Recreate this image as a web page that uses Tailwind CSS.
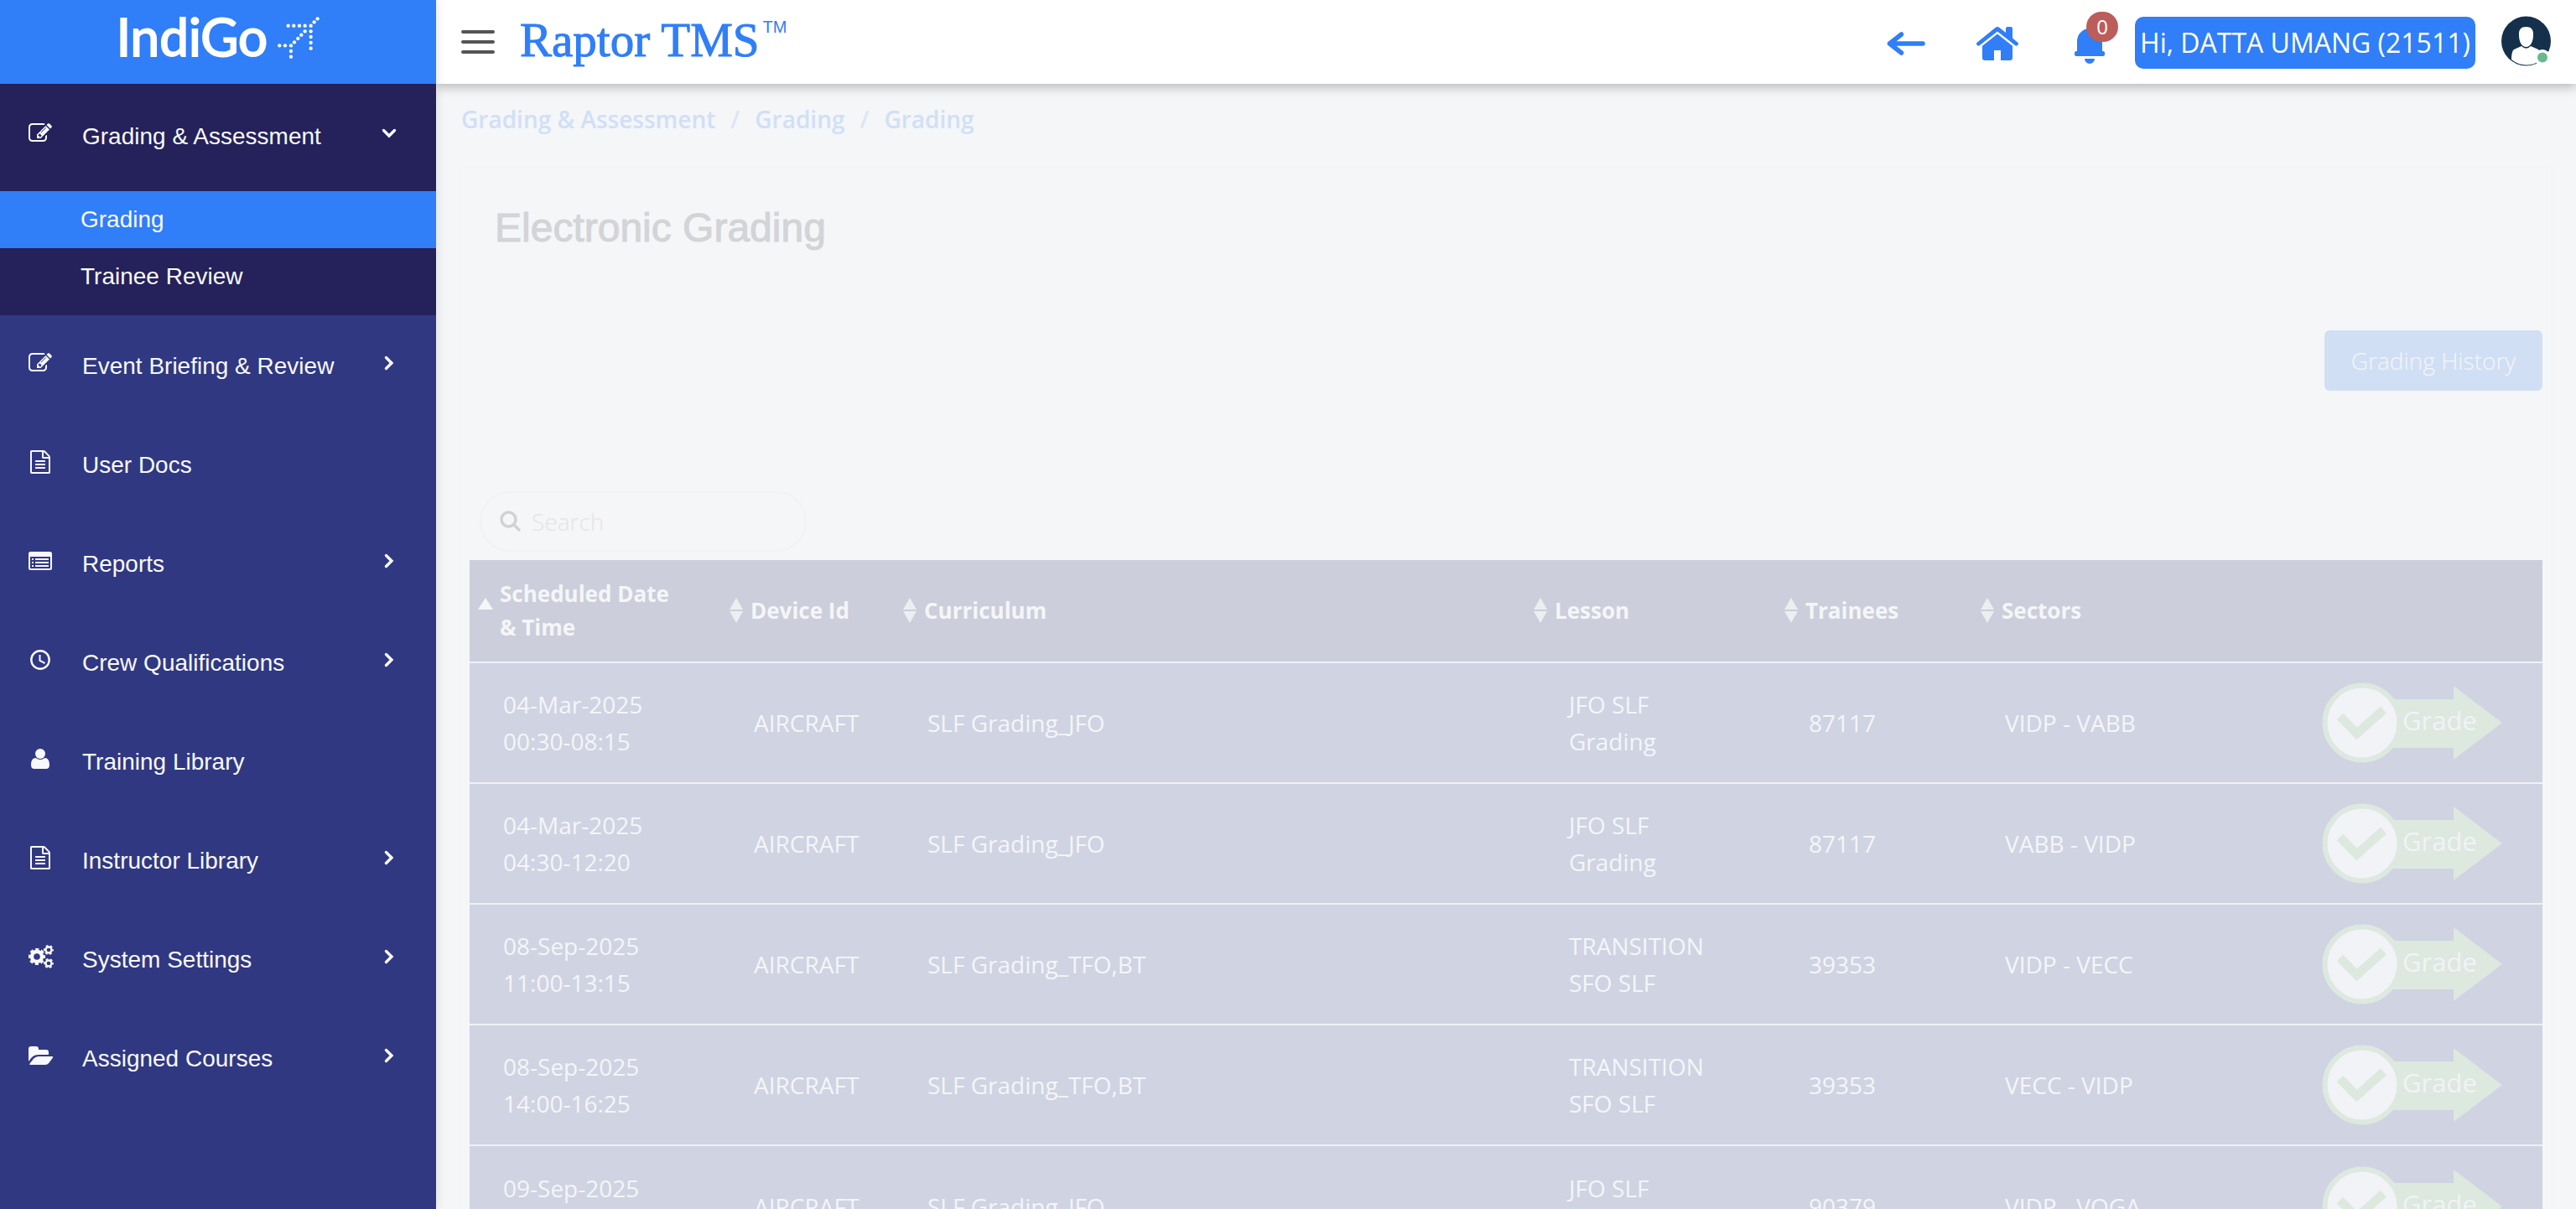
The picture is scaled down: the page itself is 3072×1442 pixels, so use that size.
<!DOCTYPE html>
<html lang="en">
<head>
<meta charset="utf-8">
<title>Raptor TMS - Electronic Grading</title>
<script src="https://cdn.jsdelivr.net/npm/@tailwindcss/browser@4"></script>
</head>
<body class="h-screen overflow-hidden bg-[#f4f6f8] font-['Open_Sans',sans-serif] text-[28px]">

<svg class="hidden" aria-hidden="true">
  <symbol id="edit" viewBox="0 0 1792 1792"><path d="M888 1184l116-116-152-152-116 116v56h96v96h56zm440-720q-16-16-33 1l-350 350q-17 17-1 33t33-1l350-350q17-17 1-33zm80 594v190q0 119-84.5 203.5t-203.5 84.5h-832q-119 0-203.5-84.5t-84.5-203.5v-832q0-119 84.5-203.5t203.5-84.5h832q63 0 117 25 15 7 18 23 3 17-9 29l-49 49q-14 14-32 8-23-6-45-6h-832q-66 0-113 47t-47 113v832q0 66 47 113t113 47h832q66 0 113-47t47-113v-126q0-13 9-22l64-64q15-15 35-7t20 29zm-96-738l288 288-672 672h-288v-288zm444 132l-92 92-288-288 92-92q28-28 68-28t68 28l152 152q28 28 28 68t-28 68z"/></symbol>
  <symbol id="file" viewBox="0 0 1792 1792"><path d="M1596 380q28 28 48 76t20 88v1152q0 40-28 68t-68 28h-1344q-40 0-68-28t-28-68v-1600q0-40 28-68t68-28h896q40 0 88 20t76 48zm-444-244v376h376q-10-29-22-41l-313-313q-12-12-41-22zm384 1528v-1024h-416q-40 0-68-28t-28-68v-416h-768v1536h1280zm-1024-864q0-14 9-23t23-9h704q14 0 23 9t9 23v64q0 14-9 23t-23 9h-704q-14 0-23-9t-9-23v-64zm736 224q14 0 23 9t9 23v64q0 14-9 23t-23 9h-704q-14 0-23-9t-9-23v-64q0-14 9-23t23-9h704zm0 256q14 0 23 9t9 23v64q0 14-9 23t-23 9h-704q-14 0-23-9t-9-23v-64q0-14 9-23t23-9h704z"/></symbol>
  <symbol id="list" viewBox="0 0 28 28"><path fill-rule="evenodd" d="M2.500 3h23a2.500 2.500 0 0 1 2.500 2.500v17a2.500 2.500 0 0 1-2.500 2.500h-23a2.500 2.500 0 0 1-2.500-2.500v-17a2.500 2.500 0 0 1 2.500-2.500zM2 9v13.500q0 .5.5.5h23q.5 0 .5-.5v-13.500z"/><path d="M4 11h2v2H4zM8 11h16v2H8zM4 15h2v2H4zM8 15h16v2H8zM4 19h2v2H4zM8 19h16v2H8z"/></symbol>
  <symbol id="clock" viewBox="0 0 28 28"><circle cx="14" cy="14" r="10.700" fill="none" stroke="currentColor" stroke-width="2.400"/><path d="M13.500 8v7l6 3" fill="none" stroke="currentColor" stroke-width="2"/></symbol>
  <symbol id="user" viewBox="0 0 28 28"><circle cx="14" cy="8" r="6"/><path d="M8.500 13q5.500 4 11 0C23.500 13 25 17 25 21.500c0 3-1.500 4.500-4 4.500H7c-2.500 0-4-1.500-4-4.500C3 17 4.500 13 8.500 13z"/></symbol>
  <symbol id="cogs" viewBox="0 0 30 28"><g fill="none" stroke="currentColor"><circle cx="10" cy="14" r="6" stroke-width="4.400"/><circle cx="10" cy="14" r="8.600" stroke-width="3" stroke-dasharray="4 2.754" stroke-dashoffset="2"/><circle cx="24" cy="6" r="3.500" stroke-width="2.400"/><circle cx="24" cy="6" r="5" stroke-width="2" stroke-dasharray="2.800 2.436" stroke-dashoffset="1.400"/><circle cx="24" cy="22" r="3.500" stroke-width="2.400"/><circle cx="24" cy="22" r="5" stroke-width="2" stroke-dasharray="2.800 2.436" stroke-dashoffset="1.400"/></g></symbol>
  <symbol id="folder" viewBox="0 0 30 28"><path d="M0 21V6a3 3 0 0 1 3-3h6a3 3 0 0 1 3 3v1h9a3 3 0 0 1 3 3v3H12q-5 0-8 3z"/><path d="M12 15h16q2 0 .7 2l-4.500 6q-1.700 2-4.200 2H2.500q-2 0-.7-2l4.500-5.500Q8.500 15 12 15z"/></symbol>
  <symbol id="chevron" viewBox="0 0 12 18"><path d="M2.500 2.500L9 9l-6.500 6.500" fill="none" stroke="currentColor" stroke-width="3.400" stroke-linecap="round"/></symbol>
  <symbol id="sort" viewBox="0 0 16 30"><path d="M8 0l8 14H0zM8 30l8-14H0z"/></symbol>
  <symbol id="grade" viewBox="0 0 216 96">
    <path d="M60 20h97V4l58 44-58 44V78H60z" fill="#dde8df"/>
    <circle cx="48" cy="48" r="44.500" fill="#f1f3f6" stroke="#dde8df" stroke-width="6"/>
    <path d="M21.500 40.500L41.500 61 73.500 32.500" fill="none" stroke="#dde8df" stroke-width="10.500"/>
    <text x="96" y="57" font-family="Open Sans" font-size="31" font-weight="500" fill="#f1f3f6">Grade</text>
  </symbol>
</svg>

<div class="flex h-full">
  <aside class="relative z-20 flex w-[520px] shrink-0 flex-col bg-[#303882] font-['Liberation_Sans',sans-serif] text-[#f8f9fc] shadow-[0_0_12px_rgba(0,0,0,0.12)]">
    <a href="#" class="flex h-[100px] shrink-0 items-center justify-center gap-3 bg-[#307ef8] pb-[10px] text-white">
      <span class="pb-1 font-['Lato',sans-serif] text-[62px] leading-[76px] [-webkit-text-stroke:2px_white]">IndiGo</span>
      <svg class="size-[50px] fill-white" viewBox="690 60 150 150" aria-hidden="true">
        <circle cx="697" cy="163" r="6.500"/><circle cx="717" cy="163" r="6.500"/><circle cx="738" cy="163" r="6.500"/><circle cx="738" cy="183" r="6.500"/><circle cx="738" cy="203" r="6.500"/><circle cx="750" cy="151" r="6.500"/><circle cx="763" cy="138" r="6.500"/><circle cx="775" cy="125" r="6.500"/><circle cx="788" cy="112" r="6.500"/><circle cx="809" cy="92" r="6.500"/><circle cx="821" cy="79" r="6.500"/><circle cx="833" cy="67" r="6.500"/><circle cx="728" cy="92" r="6.500"/><circle cx="748" cy="92" r="6.500"/><circle cx="768" cy="92" r="6.500"/><circle cx="788" cy="92" r="6.500"/><circle cx="809" cy="112" r="6.500"/><circle cx="809" cy="132" r="6.500"/><circle cx="809" cy="153" r="6.500"/><circle cx="809" cy="173" r="6.500"/>
      </svg>
    </a>
    <nav class="leading-8">
      <div class="bg-[#24215b] pb-3">
        <a href="#" class="flex h-[128px] items-center pr-12 pb-[10px] pl-[34px]"><svg class="h-7 w-[30px] shrink-0 fill-current"><use href="#edit" width="28" height="28"/></svg><span class="grow pt-2 pl-[34px]">Grading &amp; Assessment</span><svg class="mr-0.5 h-[18px] w-3 rotate-90"><use href="#chevron"/></svg></a>
        <a href="#" class="flex h-[68px] items-center bg-[#307ef8] pl-24">Grading</a>
        <a href="#" class="flex h-[68px] items-center pl-24">Trainee Review</a>
      </div>
      <a href="#" class="flex h-[118px] items-center pr-12 pb-1 pl-[34px]"><svg class="h-7 w-[30px] shrink-0 fill-current"><use href="#edit" width="28" height="28"/></svg><span class="grow pt-2 pl-[34px]">Event Briefing &amp; Review</span><svg class="mr-0.5 h-[18px] w-3"><use href="#chevron"/></svg></a>
      <a href="#" class="flex h-[118px] items-center pr-12 pb-1 pl-[34px]"><svg class="h-7 w-[30px] shrink-0 fill-current"><use href="#file" width="28" height="28"/></svg><span class="grow pt-2 pl-[34px]">User Docs</span></a>
      <a href="#" class="flex h-[118px] items-center pr-12 pb-1 pl-[34px]"><svg class="h-7 w-[30px] shrink-0 fill-current"><use href="#list" width="28" height="28"/></svg><span class="grow pt-2 pl-[34px]">Reports</span><svg class="mr-0.5 h-[18px] w-3"><use href="#chevron"/></svg></a>
      <a href="#" class="flex h-[118px] items-center pr-12 pb-1 pl-[34px]"><svg class="h-7 w-[30px] shrink-0 fill-current"><use href="#clock" width="28" height="28"/></svg><span class="grow pt-2 pl-[34px]">Crew Qualifications</span><svg class="mr-0.5 h-[18px] w-3"><use href="#chevron"/></svg></a>
      <a href="#" class="flex h-[118px] items-center pr-12 pb-1 pl-[34px]"><svg class="h-7 w-[30px] shrink-0 fill-current"><use href="#user" width="28" height="28"/></svg><span class="grow pt-2 pl-[34px]">Training Library</span></a>
      <a href="#" class="flex h-[118px] items-center pr-12 pb-1 pl-[34px]"><svg class="h-7 w-[30px] shrink-0 fill-current"><use href="#file" width="28" height="28"/></svg><span class="grow pt-2 pl-[34px]">Instructor Library</span><svg class="mr-0.5 h-[18px] w-3"><use href="#chevron"/></svg></a>
      <a href="#" class="flex h-[118px] items-center pr-12 pb-1 pl-[34px]"><svg class="h-7 w-[30px] shrink-0 fill-current"><use href="#cogs"/></svg><span class="grow pt-2 pl-[34px]">System Settings</span><svg class="mr-0.5 h-[18px] w-3"><use href="#chevron"/></svg></a>
      <a href="#" class="flex h-[118px] items-center pr-12 pb-1 pl-[34px]"><svg class="h-7 w-[30px] shrink-0 fill-current"><use href="#folder"/></svg><span class="grow pt-2 pl-[34px]">Assigned Courses</span><svg class="mr-0.5 h-[18px] w-3"><use href="#chevron"/></svg></a>
    </nav>
  </aside>

  <div class="flex min-w-0 grow flex-col">
    <header class="relative z-10 flex h-[100px] shrink-0 items-center bg-white pr-[30px] pl-[30px] text-[#307ef8] shadow-[0_4px_12px_rgba(0,0,0,0.25)]">
      <button type="button" aria-label="Toggle menu" class="flex w-10 flex-col gap-2"><span class="h-1 rounded-xs bg-[#555]"></span><span class="h-1 rounded-xs bg-[#555]"></span><span class="h-1 rounded-xs bg-[#555]"></span></button>
      <a href="#" class="flex items-start pb-1 pl-[30px]"><span class="font-['Liberation_Serif',serif] text-[57px] leading-16 [-webkit-text-stroke:1px_#307ef8]">Raptor TMS</span><span class="pt-1 pl-1 font-['Liberation_Sans',sans-serif] text-[20px] leading-6">TM</span></a>
      <div class="ml-auto flex items-center">
        <button type="button" aria-label="Back" class="pt-1"><svg class="h-7 w-[46px]" viewBox="0 0 46 28" fill="none" stroke="currentColor" stroke-width="5.500" stroke-linecap="round" stroke-linejoin="round"><path d="M43 14H4M17.500 3L3.500 14l14 11"/></svg></button>
        <a href="#" aria-label="Home" class="ml-[61px] pt-1"><svg class="h-10 w-[50px] fill-current" viewBox="0 0 50 40"><path d="M35 2q0-2 2-2h4q2 0 2 2v11.500l6.300 5.200q1.500 1.500 0 3t-3 .6L25 5.500 3.700 22.300q-1.500 1-3-.6t0-3L22.500 1Q25-1 27.500 1L35 7z"/><path d="M25 8.500l18 14.300V37q0 3-3 3H29V28h-8v12H10q-3 0-3-3V22.800z"/></svg></a>
        <button type="button" aria-label="Notifications" class="relative ml-[67px] pt-[10px]"><svg class="h-[42px] w-9 fill-current" viewBox="0 0 36 42"><path d="M3 27V15a15 15 0 0 1 30 0v12h1q2 0 2 2v2q0 2-2 2H2q-2 0-2-2v-2q0-2 2-2zM12 36h12a6 6 0 0 1-12 0z"/></svg><span class="absolute -top-[10px] left-[14px] flex h-9 w-[38px] items-center justify-center rounded-full bg-[#bb5d5b] text-[24px] leading-9 text-white">0</span></button>
        <button type="button" class="mt-0.5 ml-9 flex h-[62px] w-[406px] items-center justify-center rounded-[10px] bg-[#307ef8] text-[32px] whitespace-nowrap text-white">Hi, DATTA UMANG (21511)</button>
        <button type="button" aria-label="Profile" class="mb-0.5 ml-[31px]"><svg class="h-[60px] w-[59px]" viewBox="0 0 59 60"><circle cx="29.500" cy="30" r="29.500" fill="#15304b"/><path d="M29.500 13c6 0 9 3 8.500 10 0 8-3.500 14-8.500 14s-8.500-6-8.500-14c-.5-7 2.500-10 8.500-10zM24 36q5.500 5.500 11 0l9 4q3 2 3 13-8 5.500-17.500 5.500T12 52q0-10 3-12z" fill="#fff"/><circle cx="49" cy="49.500" r="9.500" fill="#fff"/><circle cx="49" cy="49.500" r="6" fill="#68b98c"/></svg></button>
      </div>
    </header>

    <main class="min-h-0 grow overflow-hidden">
      <nav aria-label="Breadcrumb" class="flex h-[86px] items-center gap-[18px] pb-0.5 pl-[30px] font-semibold text-[#d1dff6]"><a href="#">Grading &amp; Assessment</a><span class="text-[#dbe7f2]">/</span><a href="#">Grading</a><span class="text-[#dbe7f2]">/</span><a href="#">Grading</a></nav>

      <section class="mx-7 mt-3 border-2 border-[#f2f4f7] px-[10px]">
        <h1 class="mt-9 pl-[30px] font-['Liberation_Sans',sans-serif] text-[48px] leading-[72px] text-[#d2d4d7] [-webkit-text-stroke:1px_#d2d4d7]">Electronic Grading</h1>
        <div class="mt-[86px] flex justify-end"><button type="button" class="h-[72px] w-[260px] rounded-md bg-[#d1dff5] font-light text-[#f4f6f8]">Grading History</button></div>
        <label class="mt-[120px] ml-3 flex h-[72px] w-[390px] items-center gap-3 rounded-full border-2 border-[#f0f2f4] pl-[22px]">
          <svg class="size-[26px] shrink-0 text-[#d0d2d4]" viewBox="0 0 26 26" fill="none" stroke="currentColor" stroke-width="3.500" stroke-linecap="round"><circle cx="10.500" cy="10.500" r="8.500"/><path d="M17 17l6 6"/></svg>
          <input type="search" placeholder="Search" aria-label="Search" class="min-w-0 grow bg-transparent font-light outline-none placeholder:text-[#e3e5e7]">
        </label>

        <table class="mt-[10px] w-full table-fixed border-collapse text-left text-[#f4f6f8]">
          <colgroup><col class="w-[299px]"><col class="w-[207px]"><col><col class="w-[299px]"><col class="w-[234px]"><col class="w-[380px]"><col class="w-[301px]"></colgroup>
          <thead>
            <tr class="h-[122px] bg-[#cdcedb] text-[26px] leading-10">
              <th class="p-0 pb-0.5"><div class="flex items-center pl-[10px]"><svg class="mr-2 h-[30px] w-[18px] shrink-0 fill-[#f4f6f8]" viewBox="0 0 18 30"><path d="M9 0l9 14H0z"/></svg><span>Scheduled Date<br>&amp; Time</span></div></th>
              <th class="p-0 pb-0.5"><div class="flex items-center pl-[11px]"><svg class="mr-[9px] h-[30px] w-4 shrink-0 fill-[#edeef0]"><use href="#sort"/></svg>Device Id</div></th>
              <th class="p-0 pb-0.5"><div class="flex items-center pl-[11px]"><svg class="mr-[9px] h-[30px] w-4 shrink-0 fill-[#edeef0]"><use href="#sort"/></svg>Curriculum</div></th>
              <th class="p-0 pb-0.5"><div class="flex items-center pl-[11px]"><svg class="mr-[9px] h-[30px] w-4 shrink-0 fill-[#edeef0]"><use href="#sort"/></svg>Lesson</div></th>
              <th class="p-0 pb-0.5"><div class="flex items-center pl-[11px]"><svg class="mr-[9px] h-[30px] w-4 shrink-0 fill-[#edeef0]"><use href="#sort"/></svg>Trainees</div></th>
              <th class="p-0 pb-0.5"><div class="flex items-center pl-[11px]"><svg class="mr-[9px] h-[30px] w-4 shrink-0 fill-[#edeef0]"><use href="#sort"/></svg>Sectors</div></th>
              <th class="p-0 pb-0.5"></th>
            </tr>
          </thead>
          <tbody class="leading-11 font-medium">
            <tr class="h-36 border-t-2 border-[#f0f1f5] bg-[#d0d3e2]"><td class="pl-10">04-Mar-2025<br>00:30-08:15</td><td class="pl-10">AIRCRAFT</td><td class="pl-10">SLF Grading_JFO</td><td class="pl-[53px]">JFO SLF<br>Grading</td><td class="pl-10">87117</td><td class="pl-10">VIDP - VABB</td><td class="pl-[38px]"><button type="button" class="block"><svg class="h-24 w-[216px]"><use href="#grade"/></svg></button></td></tr>
            <tr class="h-36 border-t-2 border-[#f0f1f5] bg-[#d0d3e2]"><td class="pl-10">04-Mar-2025<br>04:30-12:20</td><td class="pl-10">AIRCRAFT</td><td class="pl-10">SLF Grading_JFO</td><td class="pl-[53px]">JFO SLF<br>Grading</td><td class="pl-10">87117</td><td class="pl-10">VABB - VIDP</td><td class="pl-[38px]"><button type="button" class="block"><svg class="h-24 w-[216px]"><use href="#grade"/></svg></button></td></tr>
            <tr class="h-36 border-t-2 border-[#f0f1f5] bg-[#d0d3e2]"><td class="pl-10">08-Sep-2025<br>11:00-13:15</td><td class="pl-10">AIRCRAFT</td><td class="pl-10">SLF Grading_TFO,BT</td><td class="pl-[53px]">TRANSITION<br>SFO SLF</td><td class="pl-10">39353</td><td class="pl-10">VIDP - VECC</td><td class="pl-[38px]"><button type="button" class="block"><svg class="h-24 w-[216px]"><use href="#grade"/></svg></button></td></tr>
            <tr class="h-36 border-t-2 border-[#f0f1f5] bg-[#d0d3e2]"><td class="pl-10">08-Sep-2025<br>14:00-16:25</td><td class="pl-10">AIRCRAFT</td><td class="pl-10">SLF Grading_TFO,BT</td><td class="pl-[53px]">TRANSITION<br>SFO SLF</td><td class="pl-10">39353</td><td class="pl-10">VECC - VIDP</td><td class="pl-[38px]"><button type="button" class="block"><svg class="h-24 w-[216px]"><use href="#grade"/></svg></button></td></tr>
            <tr class="h-36 border-t-2 border-[#f0f1f5] bg-[#d0d3e2]"><td class="pl-10">09-Sep-2025<br>&nbsp;</td><td class="pl-10">AIRCRAFT</td><td class="pl-10">SLF Grading_JFO</td><td class="pl-[53px]">JFO SLF<br>&nbsp;</td><td class="pl-10">90379</td><td class="pl-10">VIDP - VOGA</td><td class="pl-[38px]"><button type="button" class="block"><svg class="h-24 w-[216px]"><use href="#grade"/></svg></button></td></tr>
          </tbody>
        </table>
      </section>
    </main>
  </div>
</div>
</body>
</html>
